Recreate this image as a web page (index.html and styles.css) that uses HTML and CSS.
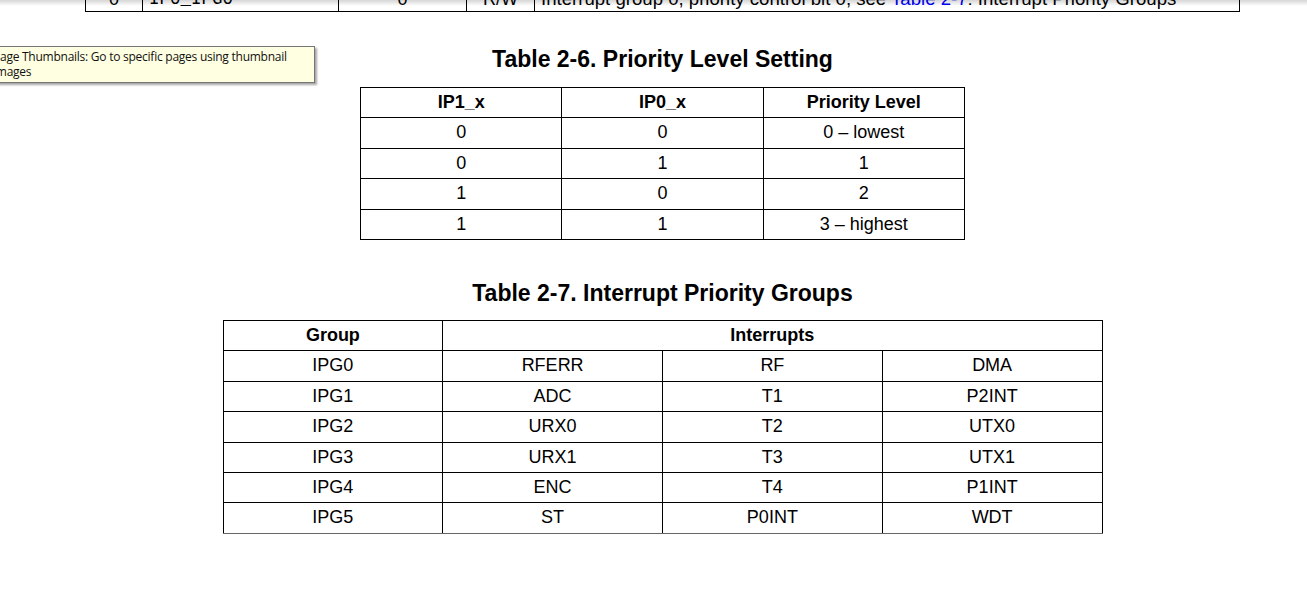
FILE: index.html
```html
<!DOCTYPE html>
<html>
<head>
<meta charset="utf-8">
<title>Interrupt Priority</title>
<link rel="stylesheet" href="styles.css">
</head>
<body>
<div class="page">
  <table class="reg">
    <tr>
      <td class="c w1">0</td>
      <td class="mono w2">IP0_IPG0</td>
      <td class="c w3">0</td>
      <td class="c w4">R/W</td>
      <td class="desc">Interrupt group 0, priority control bit 0, see <a class="xref">Table 2-7</a>: Interrupt Priority Groups</td>
    </tr>
  </table>

  <h2 class="caption cap1">Table 2-6. Priority Level Setting</h2>
  <table class="grid t6">
    <tr><th>IP1_x</th><th>IP0_x</th><th>Priority Level</th></tr>
    <tr><td>0</td><td>0</td><td>0 – lowest</td></tr>
    <tr><td>0</td><td>1</td><td>1</td></tr>
    <tr><td>1</td><td>0</td><td>2</td></tr>
    <tr><td>1</td><td>1</td><td>3 – highest</td></tr>
  </table>

  <h2 class="caption cap2">Table 2-7. Interrupt Priority Groups</h2>
  <table class="grid t7">
    <tr><th>Group</th><th colspan="3">Interrupts</th></tr>
    <tr><td>IPG0</td><td>RFERR</td><td>RF</td><td>DMA</td></tr>
    <tr><td>IPG1</td><td>ADC</td><td>T1</td><td>P2INT</td></tr>
    <tr><td>IPG2</td><td>URX0</td><td>T2</td><td>UTX0</td></tr>
    <tr><td>IPG3</td><td>URX1</td><td>T3</td><td>UTX1</td></tr>
    <tr><td>IPG4</td><td>ENC</td><td>T4</td><td>P1INT</td></tr>
    <tr class="last"><td>IPG5</td><td>ST</td><td>P0INT</td><td>WDT</td></tr>
  </table>
</div>

<div class="topshade"></div>
<div class="tooltip">Page Thumbnails: Go to specific pages using thumbnail<br>images</div>
</body>
</html>
```

FILE: styles.css
```css
html, body {
  margin: 0;
  padding: 0;
  background: #ffffff;
}

body {
  font-family: "Liberation Sans", Arial, sans-serif;
  color: #000;
  overflow: hidden;
}

.page {
  margin-left: 85px;
  width: 1155px;
}

/* partially scrolled-off register row */
.reg {
  border-collapse: collapse;
  width: 1155px;
  margin-top: -14px;
  font-size: 18px;
  table-layout: fixed;
}

.reg td {
  border: 1px solid #000;
  line-height: 24px;
  padding: 0 7px;
  white-space: nowrap;
}

.reg .c { text-align: center; }
.reg .w1 { width: 42px; }
.reg .w2 { width: 179px; padding-left: 6px; padding-right: 10px; }
.reg .w3 { width: 113px; }
.reg .w4 { width: 53px; }

.reg .mono {
  font-family: "Liberation Mono", "Courier New", monospace;
  font-size: 17.5px;
}

.reg .desc {
  font-size: 18.6px;
  padding-left: 6px;
}

.xref {
  color: #0000ff;
  text-decoration: none;
}

.caption {
  margin: 0;
  font-size: 23px;
  line-height: 30px;
  font-weight: bold;
  text-align: center;
}

.cap1 { margin-top: 32px; margin-bottom: 13px; }
.cap2 { margin-top: 38px; margin-bottom: 12px; }

.grid {
  border-collapse: collapse;
  margin: 0 auto;
  font-size: 18px;
  table-layout: fixed;
}

.grid th, .grid td {
  border: 1px solid #000;
  padding: 0;
  line-height: 29.4px;
  text-align: center;
  font-weight: normal;
}

.grid th { font-weight: bold; }

.t6 { width: 605px; }
.t6 td, .t6 th { width: 33.3%; }

.t7 { width: 880px; }
.t7 td { width: 25%; }

.t7 .last td { border-bottom-color: #666; }

.topshade {
  position: fixed;
  left: 0;
  top: 0;
  right: 0;
  height: 6px;
  background: linear-gradient(to bottom, rgba(0,0,0,0.16), rgba(0,0,0,0));
  pointer-events: none;
}

.tooltip {
  position: absolute;
  left: -14px;
  top: 46px;
  width: 329px;
  box-sizing: border-box;
  height: 37px;
  padding: 2px 6px;
  background: #ffffe1;
  border: 1px solid #767676;
  box-shadow: 2px 2px 2px rgba(0, 0, 0, 0.35);
  font-family: "Open Sans", "Noto Sans", sans-serif;
  font-size: 12px;
  letter-spacing: -0.25px;
  line-height: 15px;
  color: #111;
  white-space: nowrap;
}
```
